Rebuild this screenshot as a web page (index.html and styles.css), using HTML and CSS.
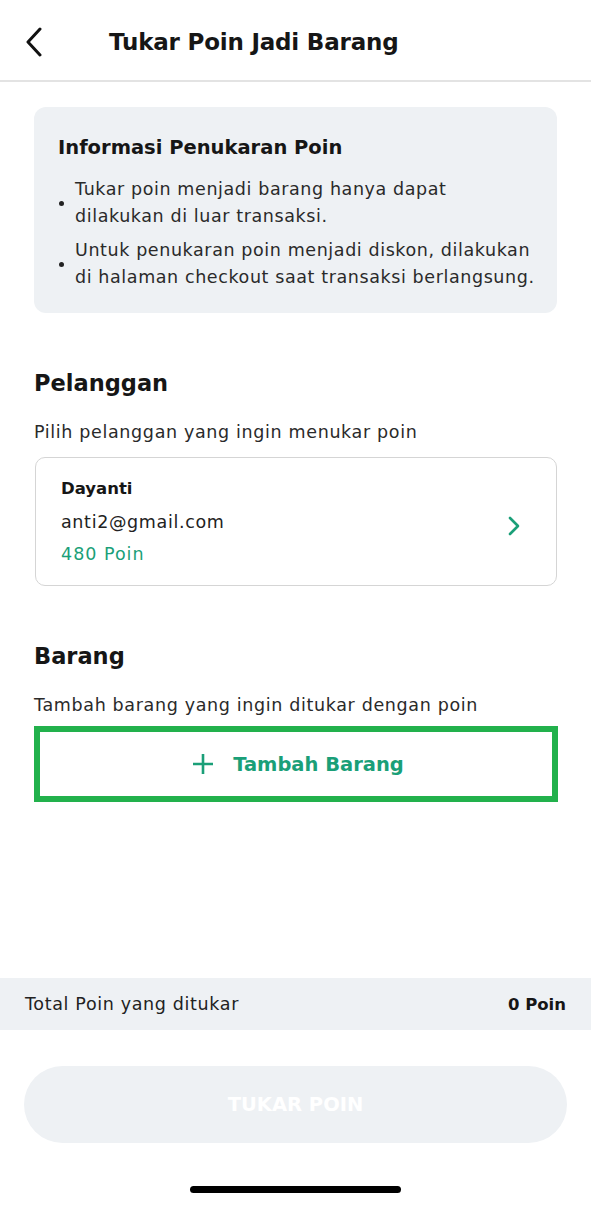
FILE: index.html
```html
<!DOCTYPE html>
<html lang="id">
<head>
<meta charset="utf-8">
<title>Tukar Poin Jadi Barang</title>
<link rel="stylesheet" href="styles.css">
</head>
<body>
<div class="screen">
  <header class="topbar">
    <svg class="back" width="20" height="30" viewBox="0 0 20 30"><path d="M16 2 L4 15 L16 28" fill="none" stroke="#111" stroke-width="3" stroke-linecap="round" stroke-linejoin="round"/></svg>
    <h1 class="title">Tukar Poin Jadi Barang</h1>
  </header>
  <main class="content">
    <section class="info">
      <h2 class="info-title">Informasi Penukaran Poin</h2>
      <ul class="info-list">
        <li><span class="dot"></span><span class="line">Tukar poin menjadi barang hanya dapat<br>dilakukan di luar transaksi.</span></li>
        <li><span class="dot"></span><span class="line">Untuk penukaran poin menjadi diskon, dilakukan<br>di halaman checkout saat transaksi berlangsung.</span></li>
      </ul>
    </section>
    <h2 class="section-title">Pelanggan</h2>
    <p class="section-sub">Pilih pelanggan yang ingin menukar poin</p>
    <div class="customer">
      <div class="customer-info">
        <div class="cust-name">Dayanti</div>
        <div class="cust-mail">anti2@gmail.com</div>
        <div class="cust-poin">480 Poin</div>
      </div>
      <svg class="chev" width="14" height="20" viewBox="0 0 14 20"><path d="M3 2 L11 10 L3 18" fill="none" stroke="#1a9f78" stroke-width="2.6" stroke-linecap="round" stroke-linejoin="round"/></svg>
    </div>
    <h2 class="section-title">Barang</h2>
    <p class="section-sub">Tambah barang yang ingin ditukar dengan poin</p>
    <button class="add-btn">
      <svg width="22" height="22" viewBox="0 0 22 22"><path d="M11 1 V21 M1 11 H21" stroke="#1a9f78" stroke-width="2.6"/></svg>
      <span>Tambah Barang</span>
    </button>
  </main>
  <div class="total">
    <span class="total-label">Total Poin yang ditukar</span>
    <span class="total-val">0 Poin</span>
  </div>
  <button class="submit">TUKAR POIN</button>
  <div class="home-ind"></div>
</div>
</body>
</html>
```
FILE: styles.css
```css
* { box-sizing: border-box; }
html, body { margin: 0; padding: 0; background: #fff; }
body {
  font-family: "DejaVu Sans", "Noto Sans", sans-serif;
  color: #1c1c1c;
}
.screen {
  width: 591px;
  height: 1206px;
  display: flex;
  flex-direction: column;
  overflow: hidden;
}
.topbar {
  height: 82px;
  flex: none;
  display: flex;
  align-items: center;
  padding: 3px 0 0 24px;
  border-bottom: 2px solid #e3e3e3;
}
.back { display: block; }
.title {
  margin: 0 0 0 65px;
  font-size: 23px;
  font-weight: 600;
  letter-spacing: -0.2px;
  color: #161616;
}
.content {
  flex: 1;
  padding: 25px 34px 0;
  display: flex;
  flex-direction: column;
}
.info {
  background: #eef1f4;
  border-radius: 12px;
  padding: 29px 12px 22px 24px;
}
.info-title {
  margin: 0;
  font-size: 19.5px;
  line-height: 24px;
  font-weight: 600;
  color: #161616;
}
.info-list {
  list-style: none;
  margin: 16px 0 0;
  padding: 0;
  font-size: 17.5px;
  letter-spacing: 0.6px;
  line-height: 27px;
  color: #2a2a2a;
}
.info-list li {
  display: flex;
  align-items: center;
  gap: 11px;
}
.info-list li + li { margin-top: 7px; }
.line { white-space: nowrap; }
.dot {
  width: 5px;
  height: 5px;
  border-radius: 50%;
  background: #222;
  flex: none;
  margin-left: 1px;
}
.section-title {
  margin: 56px 0 0;
  font-size: 22.5px;
  line-height: 28px;
  font-weight: 600;
  color: #161616;
}
.section-sub {
  margin: 23px 0 0;
  font-size: 17.5px;
  letter-spacing: 0.65px;
  line-height: 24px;
  color: #2a2a2a;
}
.customer {
  margin: 13px 0 0 1px;
  border: 1.5px solid #d5d5d5;
  border-radius: 10px;
  height: 129px;
  padding: 15px 35px 0 25px;
  display: flex;
  align-items: flex-start;
  justify-content: space-between;
}
.customer-info { font-size: 17.5px; line-height: 32.5px; letter-spacing: 0.65px; }
.cust-name { font-weight: 600; color: #161616; font-size: 16.5px; letter-spacing: 0; }
.cust-mail { color: #222; }
.cust-poin { color: #1a9f78; letter-spacing: 1px; }
.chev { margin-top: 43px; }
.add-btn {
  margin-top: 9px;
  height: 76px;
  width: 524px;
  border: 6px solid #22b14c;
  background: #fff;
  display: flex;
  align-items: center;
  justify-content: center;
  gap: 19px;
  font-family: inherit;
  font-size: 19.5px;
  font-weight: 600;
  color: #1a9f78;
  padding: 0 0 0 4px;
}
.total {
  flex: none;
  height: 52px;
  background: #eef1f4;
  display: flex;
  align-items: center;
  justify-content: space-between;
  padding: 0 25px;
  font-size: 16.5px;
  color: #222;
}
.total-label { font-size: 17.5px; letter-spacing: 0.65px; }
.total-val { font-weight: 700; color: #161616; }
.submit {
  flex: none;
  margin: 36px 24px 0;
  height: 77px;
  border: none;
  border-radius: 39px;
  background: #eef1f4;
  color: #fff;
  font-family: inherit;
  font-size: 19.5px;
  font-weight: 700;
}
.home-ind {
  flex: none;
  width: 211px;
  height: 7px;
  border-radius: 4px;
  background: #000;
  margin: 43px auto 13px;
}
```
